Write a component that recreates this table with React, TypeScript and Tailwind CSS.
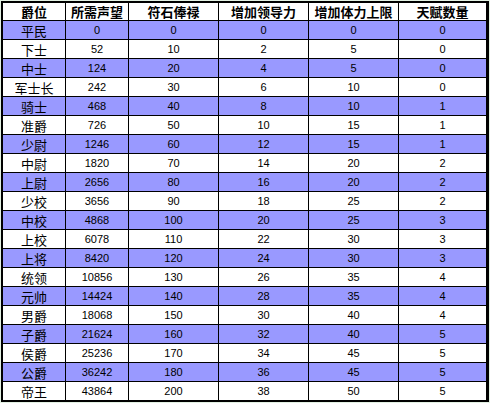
const headers = ['爵位', '所需声望', '符石俸禄', '增加领导力', '增加体力上限', '天赋数量']

const rows: [string, number, number, number, number, number][] = [
  ['平民', 0, 0, 0, 0, 0],
  ['下士', 52, 10, 2, 5, 0],
  ['中士', 124, 20, 4, 5, 0],
  ['军士长', 242, 30, 6, 10, 0],
  ['骑士', 468, 40, 8, 10, 1],
  ['准爵', 726, 50, 10, 15, 1],
  ['少尉', 1246, 60, 12, 15, 1],
  ['中尉', 1820, 70, 14, 20, 2],
  ['上尉', 2656, 80, 16, 20, 2],
  ['少校', 3656, 90, 18, 25, 2],
  ['中校', 4868, 100, 20, 25, 3],
  ['上校', 6078, 110, 22, 30, 3],
  ['上将', 8420, 120, 24, 30, 3],
  ['统领', 10856, 130, 26, 35, 4],
  ['元帅', 14424, 140, 28, 35, 4],
  ['男爵', 18068, 150, 30, 40, 4],
  ['子爵', 21624, 160, 32, 40, 5],
  ['侯爵', 25236, 170, 34, 45, 5],
  ['公爵', 36242, 180, 36, 45, 5],
  ['帝王', 43864, 200, 38, 50, 5],
]

const cjk = "font-['SimSun','Noto_Sans_CJK_SC',sans-serif]"
const num = "font-['Liberation_Sans','Noto_Sans_CJK_SC',sans-serif]"

export default function App() {
  return (
    <div className="w-[490px] h-[403px] bg-[#e3f1e3] p-px">
      <div className="border-2 border-black bg-black">
        <div className="grid grid-cols-[62px_62px_89px_89px_89px_87px] gap-px">
          {headers.map((h) => (
            <div
              key={h}
              className={`h-[17px] bg-white flex items-center justify-center text-[13px] font-bold leading-none text-black ${cjk}`}
            >
              {h}
            </div>
          ))}
          {rows.map((r, i) => {
            const bg = i % 2 === 0 ? 'bg-[#9999ff]' : 'bg-white'
            return r.map((v, j) => (
              <div
                key={`${i}-${j}`}
                className={`h-[18px] ${bg} flex items-center justify-center leading-none text-black ${
                  j === 0 ? `text-[13px] ${cjk}` : `text-[11px] ${num}`
                }`}
              >
                {v}
              </div>
            ))
          })}
        </div>
      </div>
    </div>
  )
}
